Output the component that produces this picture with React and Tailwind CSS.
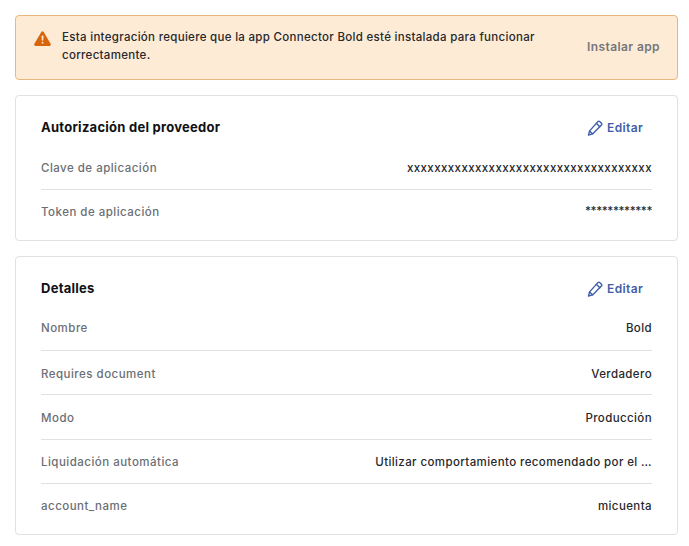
import React from "react";

function PencilIcon() {
  return (
    <svg width="16" height="16" viewBox="0 0 16 16" fill="none" stroke="#3f5fa8" strokeWidth="1.4" strokeLinejoin="round" strokeLinecap="round">
      <path d="M10.9 1.6a1.3 1.3 0 0 1 1.8 0l1.7 1.7a1.3 1.3 0 0 1 0 1.8L5.6 13.9 1.5 15l1.1-4.1z" />
      <path d="M9.3 3.2l3.5 3.5" />
      <path d="M2.6 10.9l2.9 2.9" />
    </svg>
  );
}

function WarningIcon() {
  return (
    <svg width="17" height="15" viewBox="0 0 17 15" className="mb-[19px] shrink-0">
      <path d="M7.3 1a1.4 1.4 0 0 1 2.4 0l6.9 11.8a1.4 1.4 0 0 1-1.2 2.1H1.6a1.4 1.4 0 0 1-1.2-2.1z" fill="#d9650b" />
      <rect x="7.7" y="4.6" width="1.7" height="5" rx="0.6" fill="#fdebd6" />
      <rect x="7.7" y="10.8" width="1.7" height="1.8" rx="0.6" fill="#fdebd6" />
    </svg>
  );
}

function Row({ label, value, rowClass, valueClass, last }) {
  return (
    <div className={`flex items-center justify-between gap-6 ${rowClass} ${last ? "" : "border-b border-[#dfe1e5]"}`}>
      <span className="shrink-0 text-[11.5px] font-medium tracking-[0.48px] text-[#6b6e74]">{label}</span>
      <span className={`truncate text-[11.5px] font-medium text-[#26282c] ${valueClass || "tracking-[0.4px]"}`}>{value}</span>
    </div>
  );
}

function Card({ title, rows, headClass }) {
  return (
    <section className="rounded border border-[#dfe1e5] bg-white px-[25px]">
      <div className={`flex items-center justify-between ${headClass}`}>
        <h2 className="text-[13px] font-bold tracking-[0.26px] text-[#0f1114]">{title}</h2>
        <button className="mr-[9px] flex items-center gap-[4px] text-[12px] font-semibold tracking-[0.35px] text-[#3f5fa8]">
          <PencilIcon />
          Editar
        </button>
      </div>
      {rows.map((r, i) => (
        <Row key={r.label} label={r.label} value={r.value} rowClass={r.cls} valueClass={r.valueClass} last={i === rows.length - 1} />
      ))}
    </section>
  );
}

export default function App() {
  return (
    <div className="flex min-h-[546px] flex-col gap-[15px] bg-white p-[15px] pr-[11px] font-['Inter',sans-serif]">
      <div className="flex h-[65px] items-center rounded border border-[#e9b67c] bg-[#fdebd6] pl-[18px] pr-[17px]">
        <WarningIcon />
        <p className="mb-[3px] ml-[11px] w-[500px] text-[11.5px] font-medium leading-[18px] tracking-[0.3px] text-[#26282c]">
          Esta integración requiere que la app Connector Bold esté instalada para funcionar correctamente.
        </p>
        <button className="mb-[2px] ml-auto text-[12px] font-semibold tracking-[0.4px] text-[#75777b]">Instalar app</button>
      </div>

      <Card
        title="Autorización del proveedor"
        headClass="h-[55px] pt-[8px]"
        rows={[
          { label: "Clave de aplicación", value: "xxxxxxxxxxxxxxxxxxxxxxxxxxxxxxxxxxxx", cls: "h-[39px] pb-[2px]" },
          { label: "Token de aplicación", value: "************", cls: "h-[50px] pb-[5px]", valueClass: "tracking-[-0.4px] pb-[1px]" },
        ]}
      />

      <Card
        title="Detalles"
        headClass="h-[50px] pt-[13px]"
        rows={[
          { label: "Nombre", value: "Bold", cls: "h-[44px]" },
          { label: "Requires document", value: "Verdadero", cls: "h-[44px] pt-[4px]" },
          { label: "Modo", value: "Producción", cls: "h-[45px] pt-[4px]" },
          { label: "Liquidación automática", value: "Utilizar comportamiento recomendado por el …", cls: "h-[44px] pt-[2px]" },
          { label: "account_name", value: "micuenta", cls: "h-[50px] pb-[4px]" },
        ]}
      />
    </div>
  );
}
